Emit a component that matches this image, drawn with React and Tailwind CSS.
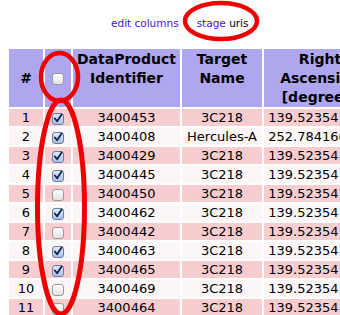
import React from "react";

const rows = [
  { n: 1, checked: true, id: "3400453", target: "3C218", ra: "139.523541667" },
  { n: 2, checked: true, id: "3400408", target: "Hercules-A", ra: "252.784166667" },
  { n: 3, checked: true, id: "3400429", target: "3C218", ra: "139.523541667" },
  { n: 4, checked: true, id: "3400445", target: "3C218", ra: "139.523541667" },
  { n: 5, checked: false, id: "3400450", target: "3C218", ra: "139.523541667" },
  { n: 6, checked: true, id: "3400462", target: "3C218", ra: "139.523541667" },
  { n: 7, checked: false, id: "3400442", target: "3C218", ra: "139.523541667" },
  { n: 8, checked: true, id: "3400463", target: "3C218", ra: "139.523541667" },
  { n: 9, checked: true, id: "3400465", target: "3C218", ra: "139.523541667" },
  { n: 10, checked: false, id: "3400469", target: "3C218", ra: "139.523541667" },
  { n: 11, checked: false, id: "3400464", target: "3C218", ra: "139.523541667" },
];

// little aqua style checkbox
const Box = ({ checked }) => (
  <span
    className={
      "inline-flex w-[12px] h-[12px] rounded-[3px] border items-center justify-center align-middle " +
      (checked
        ? "border-[#6b7fa6] bg-gradient-to-b from-[#dfe9f8] to-[#a9c1e6]"
        : "border-[#9a9a9a] bg-gradient-to-b from-white to-[#e2e2e2]")
    }
  >
    {checked && (
      <svg width="11" height="11" viewBox="0 0 11 11">
        <path d="M2 5.5 L4.5 8.5 L9.5 1" fill="none" stroke="#13204a" strokeWidth="2" strokeLinecap="round" strokeLinejoin="round" />
      </svg>
    )}
  </span>
);

export default function App() {
  return (
    <div className="relative w-[340px] h-[315px] overflow-hidden bg-white font-['DejaVu_Sans',Verdana,sans-serif] text-black">
      <div className="pt-[15px] pl-[111px] h-[47px] text-[10.5px] leading-[16px] whitespace-nowrap">
        <a className="text-[#3a12ee]">edit columns</a>
        <span className="ml-[18px] text-[#3a12ee]">stage</span>{" "}
        <span>uris</span>
      </div>

      <table className="ml-[7px] border-separate border-spacing-[2px] table-fixed w-[369px]">
        <colgroup>
          <col className="w-[34px]" />
          <col className="w-[26px]" />
          <col className="w-[107px]" />
          <col className="w-[80px]" />
          <col className="w-[112px]" />
        </colgroup>
        <thead>
          <tr className="bg-[#aea6ee] text-[14px] font-bold leading-[19px]">
            <th className="h-[58px] text-center">#</th>
            <th className="text-center">
              <Box checked={false} />
            </th>
            <th className="text-center align-top pt-[1px]">DataProduct Identifier</th>
            <th className="text-center align-top pt-[1px]">Target Name</th>
            <th className="text-center align-top pt-[1px] whitespace-nowrap">
              Right
              <br />
              Ascension
              <br />
              [degrees]
            </th>
          </tr>
        </thead>
        <tbody className="text-[13px] leading-[17px]">
          {rows.map((r) => (
            <tr key={r.n} className={r.n % 2 ? "bg-[#f8cdd0]" : "bg-[#fdf6f6]"}>
              <td className="h-[17px] p-0 text-center">{r.n}</td>
              <td className="p-0 text-center">
                <Box checked={r.checked} />
              </td>
              <td className="p-0 text-center">{r.id}</td>
              <td className="p-0 text-center whitespace-nowrap">{r.target}</td>
              <td className="p-0 text-center whitespace-nowrap">{r.ra}</td>
            </tr>
          ))}
        </tbody>
      </table>

      {/* red hand-drawn annotation rings */}
      <svg className="absolute left-0 top-0 pointer-events-none" width="340" height="315">
        <ellipse cx="221" cy="21" rx="36" ry="18" fill="none" stroke="#ee0000" strokeWidth="4.5" />
        <ellipse cx="59.5" cy="77" rx="18.5" ry="24" fill="none" stroke="#ee0000" strokeWidth="4.5" />
        <ellipse cx="61" cy="207" rx="23.5" ry="107" fill="none" stroke="#ee0000" strokeWidth="5" />
      </svg>
    </div>
  );
}
